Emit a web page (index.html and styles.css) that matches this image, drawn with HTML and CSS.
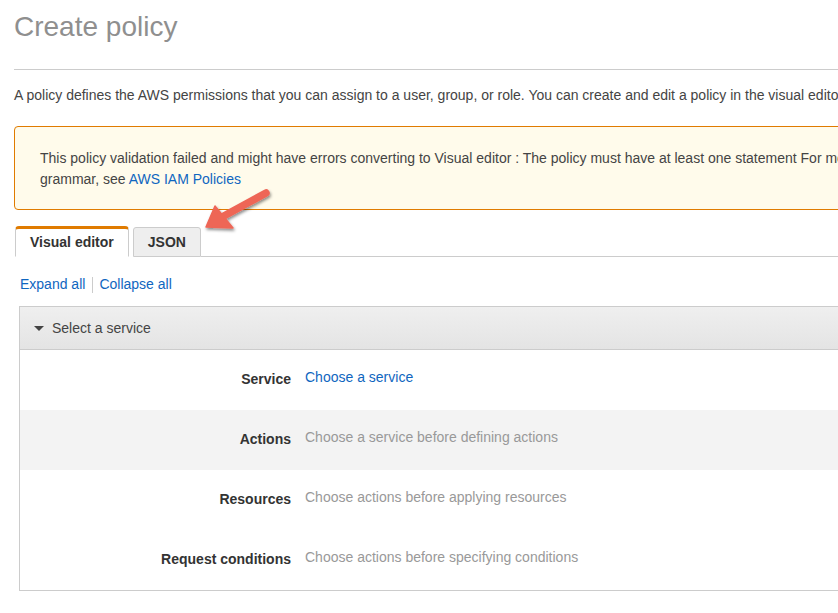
FILE: index.html
```html
<!DOCTYPE html>
<html>
<head>
<meta charset="utf-8">
<link rel="stylesheet" href="styles.css">
</head>
<body>
<div class="page">
  <h1 class="title">Create policy</h1>
  <hr class="rule">
  <p class="intro">A policy defines the AWS permissions that you can assign to a user, group, or role. You can create and edit a policy in the visual editor and using JSON. Learn more</p>
  <div class="alert">
    <p>This policy validation failed and might have errors converting to Visual editor : The policy must have at least one statement For more information about the IAM policy<br>grammar, see <a href="#">AWS IAM Policies</a></p>
  </div>
  <div class="tabs">
    <div class="tab active">Visual editor</div>
    <div class="tab">JSON</div>
    <div class="tab-fill"></div>
  </div>
  <div class="toggles">
    <a href="#">Expand all</a><span class="sep"></span><a href="#">Collapse all</a>
  </div>
  <div class="panel">
    <div class="panel-head"><span class="caret"></span>Select a service</div>
    <div class="row">
      <div class="label">Service</div>
      <div class="value"><a href="#">Choose a service</a></div>
    </div>
    <div class="row shaded">
      <div class="label">Actions</div>
      <div class="value muted">Choose a service before defining actions</div>
    </div>
    <div class="row">
      <div class="label">Resources</div>
      <div class="value muted">Choose actions before applying resources</div>
    </div>
    <div class="row">
      <div class="label">Request conditions</div>
      <div class="value muted">Choose actions before specifying conditions</div>
    </div>
  </div>
</div>
<svg class="arrow" width="838" height="613" viewBox="0 0 838 613">
  <defs>
    <filter id="sh" x="-50%" y="-50%" width="200%" height="200%">
      <feDropShadow dx="1" dy="2" stdDeviation="1.5" flood-color="#000" flood-opacity="0.45"/>
    </filter>
  </defs>
  <g filter="url(#sh)" fill="#ee6656" stroke="#ee6656">
    <line x1="266" y1="193" x2="222" y2="217" stroke-width="7.5" stroke-linecap="round"/>
    <polygon points="206,227 215,206 233,228" stroke-width="1.5" stroke-linejoin="round"/>
  </g>
</svg>
</body>
</html>
```
FILE: styles.css
```css
html, body {
  margin: 0;
  padding: 0;
  background: #fff;
  overflow: hidden;
}
body {
  font-family: "Liberation Sans", Arial, sans-serif;
  color: #444;
  width: 838px;
  height: 613px;
  position: relative;
}
.page {
  padding-left: 14px;
  width: 1100px;
}
.title {
  margin: 0;
  padding-top: 10px;
  font-size: 28px;
  font-weight: normal;
  color: #8f8f8f;
  line-height: 34px;
}
.rule {
  margin: 25px 0 0 0;
  border: 0;
  border-top: 1px solid #cccccc;
  height: 0;
}
.intro {
  margin: 17px 0 0 0;
  font-size: 14px;
  line-height: 17px;
  color: #444;
  white-space: nowrap;
}
.alert {
  margin-top: 22px;
  border: 1px solid #e07b00;
  border-radius: 4px;
  background: #fffbeb;
  padding: 21px 25px 15px 25px;
  height: 46px;
}
.alert p {
  margin: 0;
  font-size: 14px;
  line-height: 21px;
  color: #444;
  white-space: nowrap;
}
a {
  color: #0f66c0;
  text-decoration: none;
}
.tabs {
  display: flex;
  margin-top: 16px;
  align-items: flex-end;
  height: 31px;
}
.tab {
  font-size: 14px;
  font-weight: bold;
  color: #333;
  box-sizing: border-box;
  border: 1px solid #cccccc;
  border-radius: 3px 3px 0 0;
  background: #eeeeee;
  padding: 0 14px;
  line-height: 28px;
  height: 30px;
  margin-left: 4px;
}
.tab.active {
  margin-left: 1px;
  background: #fff;
  border-top: 3px solid #e07b00;
  border-bottom: 1px solid #fff;
  height: 31px;
  padding: 0 14px;
  line-height: 27px;
  border-radius: 4px 4px 0 0;
}
.tab-fill {
  flex: 1;
  border-bottom: 1px solid #cccccc;
  align-self: flex-end;
}
.tabs .tab:not(.active) {
  border-bottom: 1px solid #cccccc;
}
.toggles {
  margin-top: 19px;
  margin-left: 6px;
  font-size: 14px;
  line-height: 17px;
  display: flex;
  align-items: center;
}
.sep {
  display: inline-block;
  width: 1px;
  height: 16px;
  background: #cccccc;
  margin: 0 6px 0 7px;
}
.panel {
  margin-top: 13px;
  margin-left: 5px;
  border: 1px solid #cccccc;
  border-right: 0;
}
.panel-head {
  height: 43px;
  box-sizing: border-box;
  background: linear-gradient(#efefef, #e4e4e4);
  border-bottom: 1px solid #cccccc;
  font-size: 14px;
  color: #444;
  display: flex;
  align-items: center;
  padding-left: 14px;
  padding-bottom: 1px;
}
.caret {
  width: 0;
  height: 0;
  border-left: 5px solid transparent;
  border-right: 5px solid transparent;
  border-top: 5px solid #444;
  margin-right: 8px;
  margin-top: 1px;
}
.row {
  display: flex;
  height: 60px;
  box-sizing: border-box;
  padding-top: 19px;
  font-size: 14px;
  line-height: 17px;
}
.row.shaded {
  background: #f3f3f3;
}
.label {
  width: 271px;
  text-align: right;
  font-weight: bold;
  color: #333;
  padding-top: 2px;
}
.value {
  margin-left: 14px;
}
.muted {
  color: #999;
}
.arrow {
  position: absolute;
  left: 0;
  top: 0;
  pointer-events: none;
}
```
